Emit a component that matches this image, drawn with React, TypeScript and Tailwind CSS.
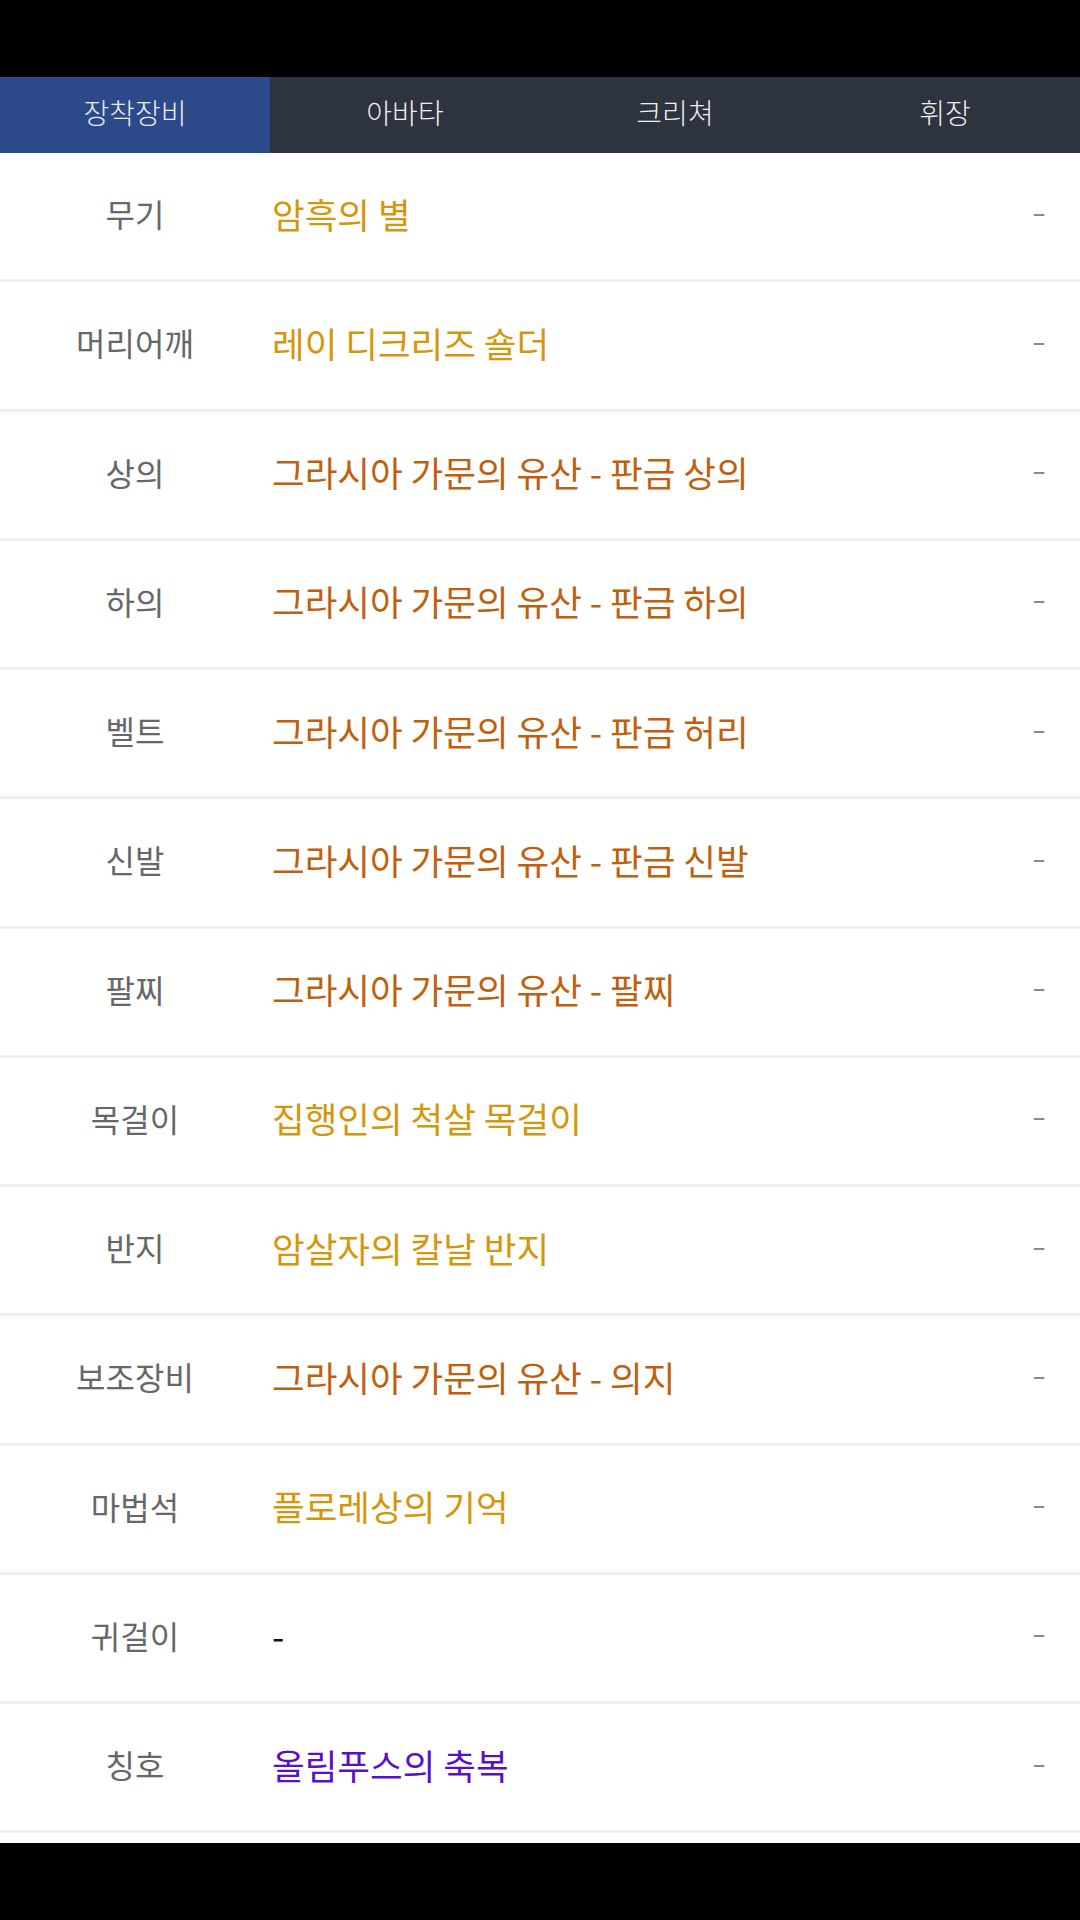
import React from "react";

type Row = { label: string; value: string; color: string };

const rows: Row[] = [
  { label: "무기", value: "암흑의 별", color: "text-[#d6960b]" },
  { label: "머리어깨", value: "레이 디크리즈 숄더", color: "text-[#d6960b]" },
  { label: "상의", value: "그라시아 가문의 유산 - 판금 상의", color: "text-[#c0600e]" },
  { label: "하의", value: "그라시아 가문의 유산 - 판금 하의", color: "text-[#c0600e]" },
  { label: "벨트", value: "그라시아 가문의 유산 - 판금 허리", color: "text-[#c0600e]" },
  { label: "신발", value: "그라시아 가문의 유산 - 판금 신발", color: "text-[#c0600e]" },
  { label: "팔찌", value: "그라시아 가문의 유산 - 팔찌", color: "text-[#c0600e]" },
  { label: "목걸이", value: "집행인의 척살 목걸이", color: "text-[#d6960b]" },
  { label: "반지", value: "암살자의 칼날 반지", color: "text-[#d6960b]" },
  { label: "보조장비", value: "그라시아 가문의 유산 - 의지", color: "text-[#c0600e]" },
  { label: "마법석", value: "플로레상의 기억", color: "text-[#d6960b]" },
  { label: "귀걸이", value: "-", color: "text-[#111111]" },
  { label: "칭호", value: "올림푸스의 축복", color: "text-[#5a10c8]" },
];

const tabs = ["장착장비", "아바타", "크리쳐", "휘장"];

export default function App() {
  return (
    <div
      className="w-[1080px] h-[1920px] bg-black flex flex-col"
      style={{ fontFamily: '"Noto Sans CJK KR", "Noto Sans", sans-serif' }}
    >
      <div className="h-[77px] shrink-0 bg-black" />
      <div className="h-[76px] shrink-0 flex bg-[#2d333f]">
        {tabs.map((t, i) => (
          <div
            key={t}
            className={
              i === 0
                ? "flex-1 flex items-center justify-center pb-[6px] bg-[#2c4a8a] text-[#e8ebf2] text-[28px] font-light"
                : "flex-1 flex items-center justify-center pb-[6px] text-[#eeeeee] text-[28px] font-light"
            }
          >
            {t}
          </div>
        ))}
      </div>
      <div className="bg-white shrink-0 pb-[10px]">
        {rows.map((r) => (
          <div
            key={r.label}
            className="h-[129.25px] flex items-center pb-[6px] border-b-[3px] border-[#efefef]"
          >
            <div className="w-[270px] shrink-0 text-center text-[32px] text-[#676767]">
              {r.label}
            </div>
            <div className={`flex-1 pl-[2px] text-[35.5px] ${r.color}`}>
              {r.value}
            </div>
            <div className="w-[70px] shrink-0 pr-[34px] pb-[10px] text-right text-[42px] font-light text-[#8a8a8a]">
              -
            </div>
          </div>
        ))}
      </div>
      <div className="flex-1 bg-black" />
    </div>
  );
}
